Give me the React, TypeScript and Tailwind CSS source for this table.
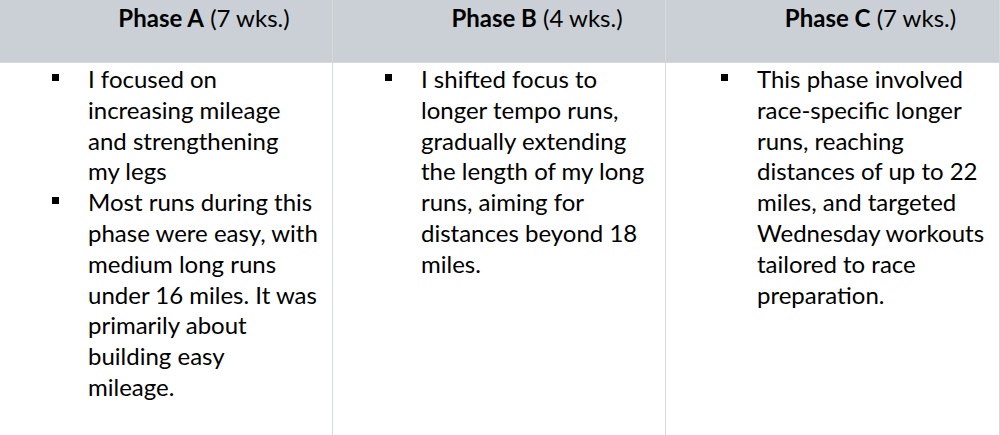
const phases = [
  {
    name: "Phase A",
    weeks: "(7 wks.)",
    pad: "pl-[52px]",
    bullets: [
      ["I focused on", "increasing mileage", "and strengthening", "my legs"],
      [
        "Most runs during this",
        "phase were easy, with",
        "medium long runs",
        "under 16 miles. It was",
        "primarily about",
        "building easy",
        "mileage.",
      ],
    ],
  },
  {
    name: "Phase B",
    weeks: "(4 wks.)",
    pad: "pl-[52px]",
    bullets: [
      [
        "I shifted focus to",
        "longer tempo runs,",
        "gradually extending",
        "the length of my long",
        "runs, aiming for",
        "distances beyond 18",
        "miles.",
      ],
    ],
  },
  {
    name: "Phase C",
    weeks: "(7 wks.)",
    pad: "pl-[55px]",
    bullets: [
      [
        "This phase involved",
        "race-specific longer",
        "runs, reaching",
        "distances of up to 22",
        "miles, and targeted",
        "Wednesday workouts",
        "tailored to race",
        "preparation.",
      ],
    ],
  },
];

export default function App() {
  return (
    <div
      className="w-[1000px] h-[435px] bg-white text-black overflow-hidden"
      style={{ fontFamily: "Lato, 'Open Sans', sans-serif" }}
    >
      <div className="grid grid-cols-[333px_333px_334px] h-full grid-rows-[63px_1fr]">
        {phases.map((p) => (
          <div
            key={p.name}
            className="bg-[#cad0d5] border-r border-b border-[#d6d8da] flex justify-center pl-[76px] pt-[2px]"
          >
            <div className="text-[24px] leading-[31px] whitespace-nowrap">
              <span className="font-bold">{p.name}</span> {p.weeks}
            </div>
          </div>
        ))}
        {phases.map((p) => (
          <div
            key={p.name + "-body"}
            className={`border-r border-[#d6d8da] pt-[1px] pr-[4px] ${p.pad}`}
          >
            <ul className="flex flex-col">
              {p.bullets.map((lines) => (
                <li key={lines[0]} className="flex text-[24px] leading-[30.8px]">
                  <span className="w-[36px] shrink-0 flex pt-[10px]">
                    <span className="block w-[7px] h-[7px] bg-black" />
                  </span>
                  <span className="flex flex-col whitespace-nowrap">
                    {lines.map((l) => (
                      <span key={l}>{l}</span>
                    ))}
                  </span>
                </li>
              ))}
            </ul>
          </div>
        ))}
      </div>
    </div>
  );
}
